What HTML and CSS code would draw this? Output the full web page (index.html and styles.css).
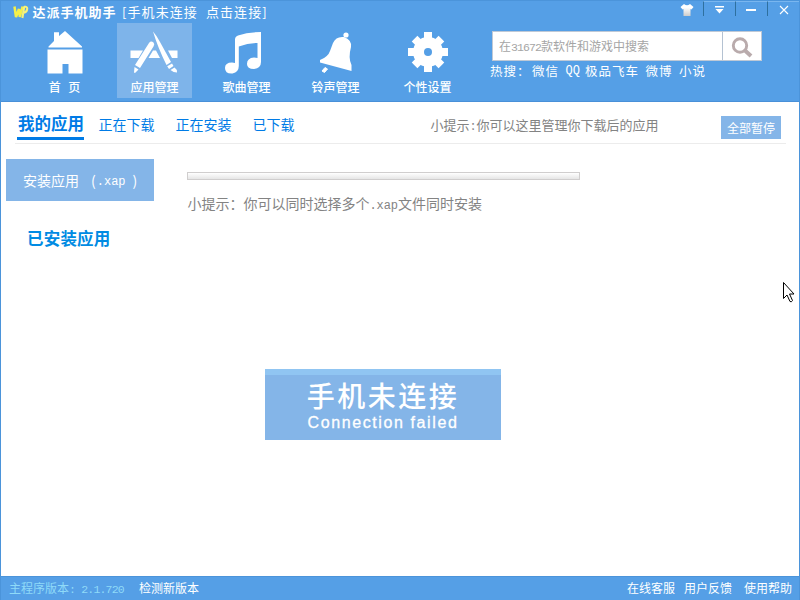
FILE: index.html
```html
<!DOCTYPE html>
<html lang="zh-CN">
<head>
<meta charset="utf-8">
<title>达派手机助手</title>
<link rel="stylesheet" href="styles.css">
</head>
<body>
<div class="window">
  <header class="header">
    <div class="brand-side">
      <div class="titlebar">
        <svg class="logo" width="16" height="14" viewBox="0 0 16 14" fill="none" stroke-linejoin="bevel">
          <path d="M1.500 1.500L3 12L6 4L6.800 12L9.600 1.500" stroke="#f5f04a" stroke-width="2.500"/>
          <path d="M9.400 13L11.200 1.800H12.500Q14.800 2 14 4.800Q13.400 7.800 10 7.700" stroke="#f8f27a" stroke-width="2.100"/>
        </svg>
        <span class="app-name">达派手机助手</span>
        <span class="status">[<span class="status-a">手机未连接</span><span class="status-b">点击连接</span>]</span>
      </div>
      <nav class="nav">
        <a class="nav-item">
          <svg class="icon" width="46" height="46" viewBox="0 0 46 46" fill="#fff">
            <path d="M6.500 17.500L12 12V3.200H17V7L23 2L40 17.500V18.500H6.500Z"/>
            <path d="M5.500 20.500H40.500V44.500H26.500V35H20.500V44.500H5.500Z"/>
          </svg>
          <span class="label label-home">首 页</span>
        </a>
        <a class="nav-item active">
          <svg class="icon" width="50" height="46" viewBox="0 0 50 46" fill="#fff">
            <path d="M.5 21.500H13L8.500 29H.5ZM38 21.500H47.500V29H42ZM23 21.500H26L30 29H18.500Z"/>
            <path d="M19 14Q21 11.500 23.500 13.500Q25 15 23.500 17.500L10 39L5 36ZM4.500 38L8.500 40.500L5 44L4 43.500Z"/>
            <path d="M23 2.500Q27 7 30 13L41 33L36.500 36Q28 19 23 2.500ZM37.200 37.200L42 34.500L43.500 37L39 40ZM40.500 41L44.500 38.500Q47 40 47 43.500Q43.500 43.500 40.500 41Z"/>
          </svg>
          <span class="label">应用管理</span>
        </a>
        <a class="nav-item">
          <svg class="icon icon-music" width="46" height="46" viewBox="0 0 46 46" fill="#fff">
            <path d="M14 10.500Q14 7.500 17 6.500Q27 3 40 3V33Q40 39 33 40Q26 40 26 35Q26 29 33 28.500Q35 28.500 36.500 29V14Q27 14 17.800 17.500V37Q17.800 43 11.500 44.500Q4 45 4 39Q4 33.500 11 33.500L14 34Z"/>
          </svg>
          <span class="label">歌曲管理</span>
        </a>
        <a class="nav-item">
          <svg class="icon" width="46" height="46" viewBox="0 0 46 46" fill="#fff">
            <circle cx="33" cy="6" r="2.600"/>
            <path d="M20 14Q23 7 31 8Q39 11 38 18Q35 29 38.500 36V42L7 33.500V31Q15 28 17 22Z"/>
            <path d="M12 38.500L14.500 40L11.500 43.500L9 42Z" stroke="#fff" stroke-linejoin="round"/>
          </svg>
          <span class="label">铃声管理</span>
        </a>
        <a class="nav-item">
          <svg class="icon" width="46" height="46" viewBox="-23 -23 46 46">
            <g fill="#fff">
              <circle r="15"/>
              <path d="M-4-20H4V20H-4Z"/>
              <path d="M-20-4V4H20V-4Z"/>
              <path d="M-4-19H4V19H-4Z" transform="rotate(45)"/>
              <path d="M-4-19H4V19H-4Z" transform="rotate(-45)"/>
            </g>
            <circle r="4" fill="#559fe6"/>
          </svg>
          <span class="label">个性设置</span>
        </a>
      </nav>
    </div>
    <div class="tools">
      <div class="controls">
        <svg class="shirt" width="14" height="14" viewBox="0 0 14 14">
          <defs><linearGradient id="cloth" x2="0" y2="1"><stop offset=".3" stop-color="#fff"/><stop offset="1" stop-color="#ccc"/></linearGradient></defs>
          <path d="M4 1Q7 3.500 10 1L13.500 4L11.500 6.500L10.500 6V13H3.500V6L2.500 6.500L.5 4Z" fill="url(#cloth)"/>
        </svg>
        <span class="control"><svg width="12" height="10" viewBox="0 0 12 10" fill="#fff"><path d="M1 1H10V2.500H1ZM1.500 4H9.500L5.500 8.500Z"/></svg></span>
        <span class="control"><svg width="12" height="10" viewBox="0 0 12 10" fill="#fff"><path d="M0 4H10V6H0Z"/></svg></span>
        <span class="control"><svg width="12" height="10" viewBox="0 0 12 10" stroke="#fff" stroke-width="1.100"><path d="M2 1L10 9M10 1L2 9"/></svg></span>
      </div>
      <div class="search">
        <span class="search-input">在<span class="digits">31672</span>款软件和游戏中搜索</span>
        <span class="search-button">
          <svg width="22" height="22" viewBox="0 0 22 22" fill="none" stroke="#b9abac"><circle cx="9" cy="8.500" r="6.700" stroke-width="2.900"/><path d="M14 13.500L20 19" stroke-width="4"/></svg>
        </span>
      </div>
      <div class="hot"><span class="hot-title">热搜：</span><span>微信</span><span class="qq">QQ</span><span>极品飞车</span><span>微博</span><span>小说</span></div>
    </div>
  </header>

  <main class="main">
    <div class="tabs">
      <a class="tab current">我的应用</a>
      <a class="tab">正在下载</a>
      <a class="tab">正在安装</a>
      <a class="tab">已下载</a>
      <span class="tip">小提示<span class="colon">:</span>你可以这里管理你下载后的应用</span>
      <a class="pause">全部暂停</a>
    </div>
    <div class="content">
      <aside class="side">
        <a class="install">安装应用<span class="paren">(</span><span class="ext">.xap</span><span class="paren-end">)</span></a>
        <h2 class="installed">已安装应用</h2>
      </aside>
      <section class="progress">
        <div class="bar"></div>
        <p class="hint">小提示：你可以同时选择多个<span class="mono">.xap</span>文件同时安装</p>
      </section>
    </div>
    <div class="notice">
      <div class="notice-cn">手机未连接</div>
      <div class="notice-en">Connection failed</div>
    </div>
  </main>

  <footer class="footer">
    <span class="version">主程序版本<span class="mono-small">: 2.1.720</span></span>
    <a>检测新版本</a>
    <span class="links"><a>在线客服</a><a>用户反馈</a><a>使用帮助</a></span>
  </footer>
  <svg class="cursor" width="13" height="22" viewBox="0 0 13 22"><path d="M1.500 1.500V17.500L5 14L8 20.500Q9.500 21.500 10.500 19.500L7.500 13H12Z" fill="#fff" stroke="#000"/></svg>
</div>
</body>
</html>
```
FILE: styles.css
```css
* { box-sizing: border-box; }
body {
  margin: 0;
  font: 12px/16px "Noto Sans CJK SC", sans-serif;
  color: #fff;
}
.window {
  position: relative;
  width: 800px;
  height: 600px;
  display: flex;
  flex-direction: column;
  background: #fff;
  border: solid #4b94da;
  border-width: 0 1px;
  overflow: hidden;
  white-space: nowrap;
}

.header {
  height: 102px;
  display: flex;
  background: #559fe6;
  border-top: 1px solid #4b94da;
  border-bottom: 1px solid #4990d8;
}
.brand-side { width: 489px; }
.titlebar {
  height: 22px;
  padding-left: 12px;
  display: flex;
  align-items: center;
}
.app-name {
  width: 84px;
  margin-left: 3.500px;
  font-size: 13px;
  font-weight: 700;
  letter-spacing: 1px;
}
.status {
  margin-left: 5.500px;
  font-size: 13px;
  letter-spacing: 1.080px;
}
.status-b { margin-left: 8px; }
.nav {
  display: grid;
  grid-template-columns: 90px 92px 89px 92px 75px;
  padding-left: 26px;
}
.nav-item {
  width: 75px;
  height: 75px;
  display: flex;
  flex-direction: column;
  align-items: center;
  padding-top: 6px;
}
.nav-item.active { background: #7eb4ea; }
.icon-music { margin-left: -6px; }
.label {
  margin-top: 4px;
  font-weight: 500;
}
.label-home { word-spacing: 5px; }

.tools { flex: 1; }
.controls {
  height: 30px;
  display: flex;
  justify-content: flex-end;
}
.shirt { margin: 2px 9px 0 0; }
.control {
  width: 32px;
  height: 15px;
  display: flex;
  justify-content: center;
  align-items: center;
  padding-top: 2px;
  border-left: 1px solid #2e709f;
  border-top: 1px solid #79b6ef;
}
.search {
  width: 270px;
  height: 30px;
  margin-left: 2px;
  display: flex;
  background: #fff;
  border: 1px solid #bfc9d6;
}
.search-input {
  width: 230px;
  padding-left: 6px;
  line-height: 27px;
  color: #a5a5a5;
  border-right: 1px solid #b4c2d2;
}
.digits {
  font: 11.500px "Liberation Mono", monospace;
  letter-spacing: -0.9px;
}
.search-button {
  flex: 1;
  display: flex;
  align-items: center;
  justify-content: center;
  padding-top: 3px;
}
.hot {
  display: flex;
  margin-top: 2px;
  font-size: 12.500px;
  letter-spacing: 1px;
  gap: 6.500px;
}
.hot-title { width: 35.500px; }
.qq {
  width: 13px;
  font: 12px/17px "Liberation Mono", monospace;
  letter-spacing: 0;
}

.main {
  flex: 1;
  display: flex;
  flex-direction: column;
}
.tabs {
  width: 771px;
  height: 42px;
  margin-left: 14px;
  padding-left: 2px;
  display: flex;
  border-bottom: 1px solid #ececec;
}
.tab {
  margin-right: 21px;
  font-size: 14px;
  line-height: 45px;
  color: #007be6;
}
.tab.current {
  width: 67px;
  height: 38px;
  margin-right: 14.500px;
  padding-left: 1px;
  font-size: 16.500px;
  font-weight: 700;
  line-height: 43px;
  border-bottom: 3px solid #007be6;
}
.tip {
  margin-left: 115px;
  font-size: 13px;
  line-height: 45px;
  color: #838383;
}
.colon { display: inline-block; width: 7px; text-align: center; }
.pause {
  width: 60px;
  height: 23px;
  margin: 14px 5px 0 auto;
  line-height: 24px;
  text-align: center;
  background: #84b5e8;
}
.content {
  height: 225px;
  display: flex;
  padding: 15px 0 0 5px;
}
.side { width: 181px; }
.install {
  display: flex;
  width: 148px;
  height: 42px;
  padding-left: 17px;
  font-size: 14px;
  line-height: 43px;
  background: #84b5e8;
}
.paren { margin-left: 12px; }
.ext {
  margin-left: 1px;
  font: 12px/46px "Liberation Mono", monospace;
}
.paren-end { margin-left: 7px; }
.installed {
  margin: 27px 0 0 21px;
  font-size: 16.500px;
  line-height: 21px;
  letter-spacing: .2px;
  color: #008be3;
}
.bar {
  width: 393px;
  height: 8px;
  margin-top: 13px;
  background: linear-gradient(#fff, #e6e6e6);
  border: 1px solid #d0cece;
}
.hint {
  margin: 14px 0 0 .5px;
  font-size: 14px;
  line-height: 18px;
  color: #838383;
}
.mono {
  font: 12px "Liberation Mono", monospace;
  letter-spacing: -0.1px;
}
.notice {
  width: 236px;
  height: 71px;
  margin-left: 264px;
  padding-top: 6px;
  background: #84b5e8;
  border-top: 6px solid #90c5f2;
  text-align: center;
}
.notice-cn {
  height: 32px;
  font-size: 28px;
  font-weight: 500;
  line-height: 28px;
  letter-spacing: 2.500px;
}
.notice-en {
  margin-top: 1px;
  font: 16px/18px "Liberation Sans", sans-serif;
  letter-spacing: 1.600px;
  -webkit-text-stroke: .3px #fff;
}

.footer {
  height: 24px;
  display: flex;
  padding: 0 7px 0 8px;
  line-height: 22px;
  background: #559fe6;
  border-top: 1px solid #4b94da;
}
.version {
  width: 130px;
  color: #8fdaf8;
}
.mono-small {
  font: 11.500px "Liberation Mono", monospace;
  letter-spacing: -.8px;
}
.links {
  display: flex;
  margin-left: auto;
}
.links a { margin-left: 9px; }
.links a:last-child { margin-left: 12px; }
.cursor {
  position: absolute;
  left: 781px;
  top: 281px;
}
```
